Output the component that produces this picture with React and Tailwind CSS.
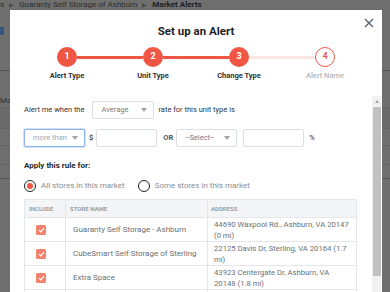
import React from "react";

const F = { fontFamily: "Roboto, 'Liberation Sans', Arial, sans-serif" };

function Arrow() {
  return <span className="w-0 h-0 border-x-[3px] border-x-transparent border-t-[4px] border-t-[#a0a4a8]" />;
}

function Select({ label, w, focus, textCls }) {
  return (
    <div
      className={`flex items-center justify-between h-[18px] ${w} rounded-[2px] border bg-white pl-[8px] pr-[6px] ${
        focus ? "border-[#8fb6ec] shadow-[0_0_0_1px_#cfe0f7]" : "border-[#dcdfe3]"
      }`}
    >
      <span className={`text-[7.5px] ${textCls}`}>{label}</span>
      <Arrow />
    </div>
  );
}

function Input({ w }) {
  return <div className={`h-[18px] ${w} rounded-[2px] border border-[#dcdfe3] bg-white`} />;
}

function Step({ n, label, left, right, done, active }) {
  return (
    <div className="flex flex-col items-center">
      <div className="flex items-center w-full h-[20px]">
        <div className={`flex-1 h-[3px] ${left}`} />
        <div
          className={`w-[20px] h-[20px] rounded-full flex items-center justify-center text-[9px] font-bold ${
            done ? "bg-[#ef5643] text-white" : "bg-white border-[1.5px] border-[#ef5643] text-[#ef5643]"
          }`}
        >
          {n}
        </div>
        <div className={`flex-1 h-[3px] ${right}`} />
      </div>
      <div className={`mt-[4px] leading-[10px] text-[7.5px] font-bold ${active ? "text-[#2f3338]" : "text-[#b3b5b8] font-medium"}`}>
        {label}
      </div>
    </div>
  );
}

function Check() {
  return (
    <div className="w-[10px] h-[10px] rounded-[1.5px] bg-[#f3826f] flex items-center justify-center">
      <svg width="7" height="6" viewBox="0 0 7 6">
        <path d="M1 3.2 L2.8 4.8 L6 1.2" fill="none" stroke="white" strokeWidth="1.2" />
      </svg>
    </div>
  );
}

const rows = [
  ["Guaranty Self Storage - Ashburn", "44690 Waxpool Rd., Ashburn, VA 20147 (0 mi)"],
  ["CubeSmart Self Storage of Sterling", "22125 Davis Dr, Sterling, VA 20164 (1.7 mi)"],
  ["Extra Space", "43923 Centergate Dr, Ashburn, VA 20148 (1.8 mi)"],
  ["", ""],
];

export default function App() {
  return (
    <div style={F} className="relative w-[390px] h-[292px] overflow-hidden bg-[#6f6f6f]">
      {/* background page (dimmed) */}
      <div className="flex flex-col">
        <div className="h-[10px] flex items-center gap-[5px] text-[8px] leading-[10px] text-[#2e2e2e] whitespace-nowrap">
          <span>s</span>
          <span className="text-[6px] text-[#4a4a4a]">▶</span>
          <span>Guaranty Self Storage of Ashburn</span>
          <span className="text-[6px] text-[#4a4a4a]">▶</span>
          <span className="font-bold text-[#1e1e1e]">Market Alerts</span>
        </div>
        <div className="mt-[17px] w-[4px] h-[8px] bg-[#33577f]" />
        <div className="mt-[35px] h-[1px] bg-[#555]" />
        <div className="mt-[24px] h-[12px] text-[8px] leading-[12px] text-[#333]">Ma</div>
        <div className="h-[1px] bg-[#646464]" />
        <div className="h-[20px] bg-[#6a6a6a]" />
        <div className="h-[1px] bg-[#646464]" />
        <div className="h-[16px]" />
        <div className="h-[1px] bg-[#646464]" />
        <div className="h-[18px]" />
        <div className="h-[1px] bg-[#646464]" />
        <div className="h-[13px]" />
        <div className="h-[1px] bg-[#555]" />
      </div>

      {/* modal */}
      <div className="absolute left-[10px] top-[10px] w-[372px] h-[290px] bg-white flex flex-col">
        <div className="relative h-[86px] flex flex-col">
          <div className="mt-[14px] text-center text-[11.5px] leading-[14px] font-bold text-[#1f2328]">Set up an Alert</div>
          <button className="absolute right-[8px] top-[7px] w-[11px] h-[11px] flex items-center justify-center">
            <svg width="10" height="10" viewBox="0 0 10 10">
              <path d="M1 1 L9 9 M9 1 L1 9" stroke="#5a6472" strokeWidth="1.4" fill="none" />
            </svg>
          </button>
          <div className="mt-[9px] ml-[14px] w-[344px] grid grid-cols-4">
            <Step n="1" label="Alert Type" left="bg-transparent" right="bg-[#ef5643]" done active />
            <Step n="2" label="Unit Type" left="bg-[#ef5643]" right="bg-[#ef5643]" done active />
            <Step n="3" label="Change Type" left="bg-[#ef5643]" right="bg-[#fde6e3]" done active />
            <Step n="4" label="Alert Name" left="bg-[#fde6e3]" right="bg-transparent" />
          </div>
        </div>

        <div className="flex-1 flex min-h-0">
          <div className="flex-1 pl-[14px] pt-[5px] flex flex-col text-[7.5px] text-[#2f3338]">
            <div className="flex items-center h-[18px]">
              <span>Alert me when the</span>
              <div className="ml-[8px] mr-[4px]">
                <Select label="Average" w="w-[62px]" textCls="text-[#777c82]" />
              </div>
              <span>rate for this unit type is</span>
            </div>
            <div className="flex items-center h-[18px] mt-[10px]">
              <Select label="more than" w="w-[61px]" focus textCls="text-[#a3a7ab]" />
              <span className="ml-[4px] mr-[3px] font-medium">$</span>
              <Input w="w-[61px]" />
              <span className="ml-[6px] mr-[3px] font-bold text-[#555]">OR</span>
              <Select label="--Select--" w="w-[61px]" textCls="text-[#777c82]" />
              <div className="ml-[6px]">
                <Input w="w-[61px]" />
              </div>
              <span className="ml-[5px] text-[#555] font-medium">%</span>
            </div>
            <div className="mt-[14px] text-[8px] leading-[10px] font-bold text-[#24282d]">Apply this rule for:</div>
            <div className="mt-[9px] flex items-center h-[12px] text-[8px] text-[#8a8e93]">
              <div className="w-[12px] h-[12px] rounded-full border-[1.5px] border-[#222] flex items-center justify-center">
                <div className="w-[6px] h-[6px] rounded-full bg-[#ef5643]" />
              </div>
              <span className="ml-[5px]">All stores in this market</span>
              <div className="ml-[13px] w-[12px] h-[12px] rounded-full border-[1.5px] border-[#222]" />
              <span className="ml-[5px]">Some stores in this market</span>
            </div>
            <div className="mt-[7px] w-[333px] border border-[#e4e7ea]">
              <div className="grid grid-cols-[41px_142px_1fr] h-[18px] bg-[#f4f5f7] text-[6px] font-bold text-[#9aa0a6] border-b border-[#e4e7ea]">
                <div className="pl-[4px] flex items-center border-r border-[#e4e7ea]">INCLUDE</div>
                <div className="pl-[4px] flex items-center border-r border-[#e4e7ea]">STORE NAME</div>
                <div className="pl-[3px] flex items-center">ADDRESS</div>
              </div>
              {rows.map(([name, addr], i) => (
                <div key={i} className="grid grid-cols-[41px_142px_1fr] h-[24px] border-b border-[#e4e7ea] text-[#6b7075]">
                  <div className="pl-[11px] flex items-center border-r border-[#e4e7ea]">{name && <Check />}</div>
                  <div className="pl-[7px] flex items-center border-r border-[#e4e7ea] text-[8px]">{name}</div>
                  <div className="pl-[6px] pr-[6px] flex items-center leading-[11px] text-[7.7px]">{addr}</div>
                </div>
              ))}
            </div>
          </div>
          <div className="w-[9px] mr-[1px] bg-[#f1f1f1] flex flex-col items-center">
            <div className="h-[11px] flex items-center justify-center">
              <span className="w-0 h-0 border-x-[2.5px] border-x-transparent border-b-[3px] border-b-[#a3a3a3]" />
            </div>
            <div className="w-[8px] h-[169px] bg-[#c1c1c1]" />
          </div>
        </div>
      </div>
    </div>
  );
}
